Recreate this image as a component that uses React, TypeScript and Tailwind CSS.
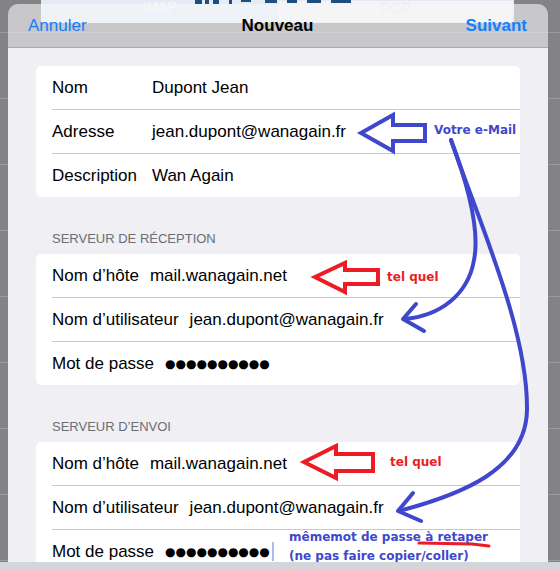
import React from "react";

const ui = "font-['Liberation_Sans','Helvetica_Neue',Arial,sans-serif]";
const note =
  "absolute font-['DejaVu_Sans',Verdana,sans-serif] font-bold text-[12px] leading-[14px] whitespace-nowrap";

type Field = { label: string; value: React.ReactNode };

const Card: React.FC<{ rows: Field[]; labelW?: string }> = ({ rows, labelW }) => (
  <div className="mx-[28px] bg-white rounded-[5px] pl-[16px]">
    {rows.map((r, i) => (
      <div
        key={i}
        className={
          i === 0
            ? "h-[43px] flex items-center text-[17px] text-black"
            : "h-[44px] flex items-center text-[17px] text-black border-t border-[#c8c7cc]"
        }
      >
        <span className={labelW ?? "mr-[11px]"}>{r.label}</span>
        {r.value}
      </div>
    ))}
  </div>
);

const Section: React.FC<{ title: string }> = ({ title }) => (
  <div className="pt-[34px] pb-[7px] pl-[44px] text-[13px] leading-[16px] text-[#6d6d72] uppercase">
    {title}
  </div>
);

const Dots: React.FC<{ cursor?: boolean }> = ({ cursor }) => (
  <span className="flex items-center">
    <span className="font-['DejaVu_Sans',sans-serif] text-[12px] text-black">●●●●●●●●●●</span>
    {cursor && <span className="ml-[2px] w-[2px] h-[19px] bg-[#a9bdf0]" />}
  </span>
);

export default function App() {
  return (
    <div className={`${ui} w-[560px] h-[569px] flex flex-col overflow-hidden`}>
      <div className="relative flex-1 overflow-hidden bg-[repeating-linear-gradient(to_bottom,#838387_0px,#838387_32px,#9a9a9e_32px,#9a9a9e_33px,#838387_33px,#838387_66px)]">
        {/* what lies behind the sheet */}
        <div className="absolute top-0 left-[41px] w-[473px] h-[23px] flex">
          <div className="w-[237px] h-full bg-[#e4ebf4] flex justify-center">
            <span className="text-[14px] leading-[14px] text-white/70">IMAP</span>
          </div>
          <div className="flex-1 h-full bg-[#f2f3f6] border border-l-0 border-[#e4eaf1] flex justify-center">
            <span className="text-[14px] leading-[14px] text-[#e6e8ec]">POP</span>
          </div>
        </div>
        <svg className="absolute top-0 left-[195px]" width="160" height="4">
          <rect x="0" y="0" width="7" height="4" fill="#1f4f7e" />
          <rect x="10" y="0" width="4" height="4" fill="#1f4f7e" />
          <rect x="18" y="0" width="6" height="4" fill="#1f4f7e" />
          <rect x="34" y="0" width="3" height="4" fill="#1f4f7e" />
          <rect x="46" y="0" width="10" height="2" fill="#1f4f7e" />
          <rect x="70" y="0" width="12" height="3" fill="#1f4f7e" />
          <rect x="92" y="0" width="10" height="3" fill="#1f4f7e" />
          <rect x="112" y="0" width="14" height="3" fill="#1f4f7e" />
          <rect x="136" y="0" width="20" height="3" fill="#1f4f7e" />
        </svg>

        {/* sheet */}
        <div className="relative mt-[4px] ml-[8px] mr-[12px] flex flex-col">
          <div className="h-[44px] grid grid-cols-[1fr_auto_1fr] items-center pl-[20px] pr-[21px] rounded-t-[10px] bg-[#f7f7f7]/60 border-b border-[#a8a8ab] text-[17px]">
            <span className="text-[#157efb]">Annuler</span>
            <span className="font-bold text-black">Nouveau</span>
            <span className="justify-self-end font-bold text-[#157efb]">Suivant</span>
          </div>
          <div className="bg-[#efeff4] pt-[18px] h-[600px]">
            <Card
              labelW="w-[100px] shrink-0"
              rows={[
                { label: "Nom", value: "Dupont Jean" },
                { label: "Adresse", value: "jean.dupont@wanagain.fr" },
                { label: "Description", value: "Wan Again" },
              ]}
            />
            <Section title="Serveur de réception" />
            <Card
              rows={[
                { label: "Nom d’hôte", value: "mail.wanagain.net" },
                { label: "Nom d’utilisateur", value: "jean.dupont@wanagain.fr" },
                { label: "Mot de passe", value: <Dots /> },
              ]}
            />
            <Section title="Serveur d’envoi" />
            <Card
              rows={[
                { label: "Nom d’hôte", value: "mail.wanagain.net" },
                { label: "Nom d’utilisateur", value: "jean.dupont@wanagain.fr" },
                { label: "Mot de passe", value: <Dots cursor /> },
              ]}
            />
          </div>
        </div>

        {/* hand-drawn annotations */}
        <svg
          className="absolute top-0 left-0 pointer-events-none"
          width="560"
          height="562"
          viewBox="0 0 560 562"
          fill="none"
        >
          <polygon
            points="361,133 393,115 393,125 425,125 425,141 393,141 393,151"
            stroke="#3f48cc"
            strokeWidth="4"
          />
          <polygon
            points="315,277 345,263 345,270 378,270 378,284 345,284 345,292"
            stroke="#ed1c24"
            strokeWidth="4"
          />
          <polygon
            points="304,462 336,446 336,454 373,454 373,471 336,471 336,478"
            stroke="#ed1c24"
            strokeWidth="4"
          />
          <path
            d="M451,140 C468,185 480,230 474,260 C468,295 440,316 404,319"
            stroke="#3f48cc"
            strokeWidth="4"
            strokeLinecap="round"
          />
          <path d="M416,304 L403,319 L424,331" stroke="#3f48cc" strokeWidth="4" strokeLinecap="round" strokeLinejoin="round" />
          <path
            d="M451,140 C480,225 528,330 527,410 C526,470 460,495 399,511"
            stroke="#3f48cc"
            strokeWidth="4"
            strokeLinecap="round"
          />
          <path d="M413,493 L398,511 L421,521" stroke="#3f48cc" strokeWidth="4" strokeLinecap="round" strokeLinejoin="round" />
          <path d="M419,543 L472,544 L489,546" stroke="#ed1c24" strokeWidth="3" strokeLinecap="round" />
        </svg>
        <span className={`${note} left-[434px] top-[123px] text-[#3f48cc]`}>Votre e-Mail</span>
        <span className={`${note} left-[387px] top-[270px] text-[#ed1c24]`}>tel quel</span>
        <span className={`${note} left-[390px] top-[455px] text-[#ed1c24]`}>tel quel</span>
        <span className={`${note} left-[289px] top-[530px] text-[#3f48cc]`}>mêmemot de passe à retaper</span>
        <span className={`${note} left-[289px] top-[549px] text-[#3f48cc]`}>(ne pas faire copier/coller)</span>
      </div>
      <div className="h-[7px] bg-[#d3d6db]" />
    </div>
  );
}
